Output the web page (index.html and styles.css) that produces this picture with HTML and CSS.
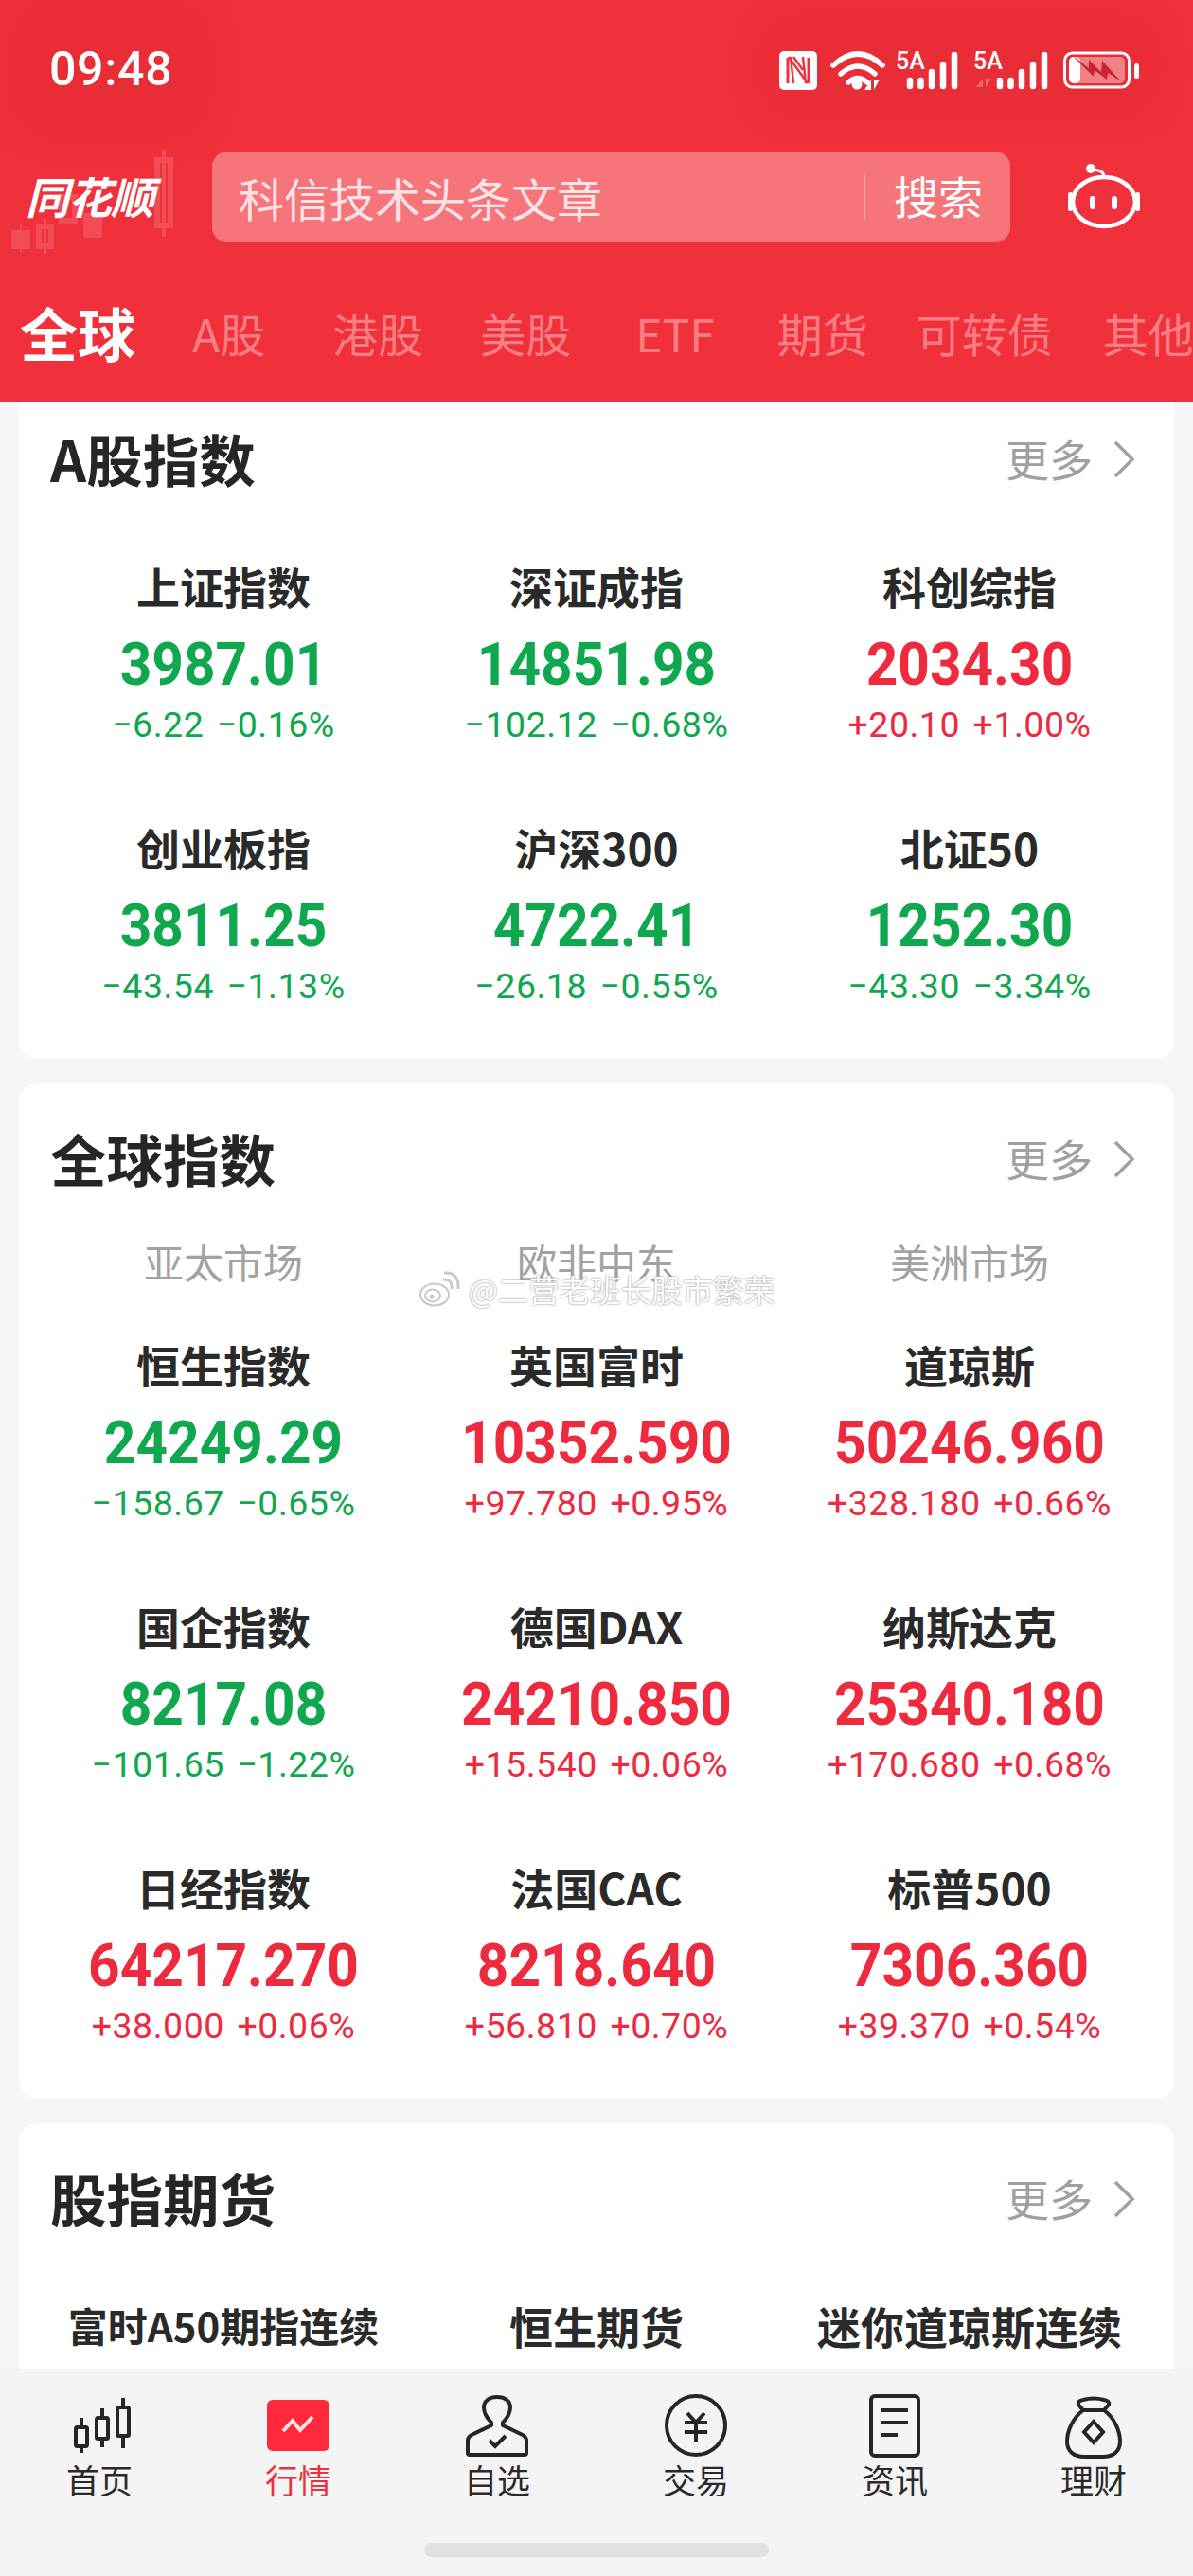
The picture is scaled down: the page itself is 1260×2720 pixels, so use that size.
FILE: index.html
```html
<!DOCTYPE html>
<html lang="zh-CN">
<head>
<meta charset="utf-8">
<title>行情</title>
<link rel="stylesheet" href="styles.css">
</head>
<body>
<div class="phone">
  <header class="header">
    <div class="status">
      <span class="time">09:48</span>
      <div class="status-icons">
        <svg class="si" width="380" height="60" viewBox="823 40 380 60">
          <rect x="823" y="54" width="40" height="41" rx="5" fill="#fff"/>
          <path d="M832 61V88M854 61V88" stroke="#f0303a" stroke-width="3" fill="none"/>
          <path d="M833 60L853 88M838 60L848 74M838 88L835 60M848 60L851 88" stroke="#f0303a" stroke-width="2.4" fill="none"/>
          <path d="M880 69Q906 45 932 69M888 78Q906 62 924 78M896 87Q906 78 916 87" stroke="#fff" stroke-width="5.5" stroke-linecap="round" fill="none"/>
          <circle cx="905" cy="89" r="5.5" fill="#fff"/>
          <path d="M918 95V84L911 95ZM921 84V95L927 84Z" fill="#fff" transform="translate(2 0)"/>
          <text class="s5a" x="946" y="73">5A</text>
          <path d="M961 85V91M972.500 85V91M984 76V91M996 68V91M1008 58V91" stroke="#fff" stroke-width="6.500" stroke-linecap="round" fill="none"/>
          <text class="s5a" x="1028" y="73">5A</text>
          <path d="M1038 83V92L1031 92ZM1041 83V92L1047 83Z" fill="#fff" opacity=".28"/>
          <path d="M1056 85V91M1067.500 85V91M1079 76V91M1091 68V91M1103 58V91" stroke="#fff" stroke-width="6.500" stroke-linecap="round" fill="none"/>
          <rect x="1124.500" y="56" width="68" height="36" rx="8" fill="none" stroke="#fff" stroke-width="3"/>
          <rect x="1129" y="60" width="59" height="28" rx="5" fill="#fff" opacity=".4"/>
          <rect x="1129" y="60" width="12" height="28" rx="5" fill="#fff"/>
          <path d="M1132 58L1150 72L1150 63L1163 76L1164 64L1184 86L1170 77L1169 84L1156 74L1155 81Z" fill="#c9252f"/>
          <rect x="1198" y="67" width="5" height="16" rx="2.500" fill="#fff"/>
        </svg>
      </div>
    </div>
    <div class="search-row">
      <svg class="candles" width="190" height="110" viewBox="0 0 190 110">
        <g fill="#fff" opacity=".14">
          <rect x="12" y="85" width="20" height="20"/><rect x="21" y="79" width="2" height="30"/>
          <path fill-rule="evenodd" d="M38 78H57V105H38ZM44 84V99H51V84Z"/><rect x="46" y="73" width="3" height="38"/>
          <path fill-rule="evenodd" d="M62 47H82V78H62ZM68 53V72H76V53Z"/>
          <rect x="88" y="67" width="20" height="26"/>
          <path fill-rule="evenodd" d="M163 8H183V83H163ZM169 14V77H177V14Z"/><rect x="171" y="0" width="4" height="92"/>
        </g>
      </svg>
      <span class="logo">同花顺</span>
      <div class="search">
        <span class="search-text">科信技术头条文章</span>
        <span class="search-btn">搜索</span>
      </div>
      <svg class="robot" width="80" height="70" viewBox="0 0 80 70">
        <ellipse cx="40" cy="40" rx="33" ry="26" fill="none" stroke="#fff" stroke-width="4.500"/>
        <path d="M40 14C40 8 35 7 29 6" stroke="#fff" stroke-width="3" fill="none"/>
        <circle cx="26" cy="5" r="5" fill="#fff"/>
        <rect x="2" y="30" width="5" height="20" rx="2.500" fill="#fff"/>
        <rect x="73" y="30" width="5" height="20" rx="2.500" fill="#fff"/>
        <rect x="25" y="34" width="6" height="14" rx="3" fill="#fff"/>
        <rect x="48" y="34" width="6" height="14" rx="3" fill="#fff"/>
      </svg>
    </div>
    <nav class="tabs">
      <span class="tab tab-on">全球</span>
      <span class="tab">A股</span>
      <span class="tab">港股</span>
      <span class="tab">美股</span>
      <span class="tab">ETF</span>
      <span class="tab">期货</span>
      <span class="tab">可转债</span>
      <span class="tab">其他</span>
    </nav>
  </header>

  <main class="content">
    <section class="card card-first">
      <div class="card-head"><h2 class="card-title">A股指数</h2><span class="more">更多<svg class="chev" width="24" height="40" viewBox="0 0 24 40"><path d="M3 2L21 20L3 38" fill="none" stroke="#a0a0a0" stroke-width="3.500"/></svg></span></div>
      <div class="grid grid-a">
        <div class="item"><div class="name">上证指数</div><div class="val down">3987.01</div><div class="chg down">−6.22&nbsp;&nbsp;−0.16%</div></div>
        <div class="item"><div class="name">深证成指</div><div class="val down">14851.98</div><div class="chg down">−102.12&nbsp;&nbsp;−0.68%</div></div>
        <div class="item"><div class="name">科创综指</div><div class="val up">2034.30</div><div class="chg up">+20.10&nbsp;&nbsp;+1.00%</div></div>
        <div class="item"><div class="name">创业板指</div><div class="val down">3811.25</div><div class="chg down">−43.54&nbsp;&nbsp;−1.13%</div></div>
        <div class="item"><div class="name">沪深300</div><div class="val down">4722.41</div><div class="chg down">−26.18&nbsp;&nbsp;−0.55%</div></div>
        <div class="item"><div class="name">北证50</div><div class="val down">1252.30</div><div class="chg down">−43.30&nbsp;&nbsp;−3.34%</div></div>
      </div>
    </section>

    <section class="card">
      <div class="card-head"><h2 class="card-title">全球指数</h2><span class="more">更多<svg class="chev" width="24" height="40" viewBox="0 0 24 40"><path d="M3 2L21 20L3 38" fill="none" stroke="#a0a0a0" stroke-width="3.500"/></svg></span></div>
      <div class="regions"><span>亚太市场</span><span>欧非中东</span><span>美洲市场</span></div>
      <div class="grid">
        <div class="item"><div class="name">恒生指数</div><div class="val down">24249.29</div><div class="chg down">−158.67&nbsp;&nbsp;−0.65%</div></div>
        <div class="item"><div class="name">英国富时</div><div class="val up">10352.590</div><div class="chg up">+97.780&nbsp;&nbsp;+0.95%</div></div>
        <div class="item"><div class="name">道琼斯</div><div class="val up">50246.960</div><div class="chg up">+328.180&nbsp;&nbsp;+0.66%</div></div>
        <div class="item"><div class="name">国企指数</div><div class="val down">8217.08</div><div class="chg down">−101.65&nbsp;&nbsp;−1.22%</div></div>
        <div class="item"><div class="name">德国DAX</div><div class="val up">24210.850</div><div class="chg up">+15.540&nbsp;&nbsp;+0.06%</div></div>
        <div class="item"><div class="name">纳斯达克</div><div class="val up">25340.180</div><div class="chg up">+170.680&nbsp;&nbsp;+0.68%</div></div>
        <div class="item"><div class="name">日经指数</div><div class="val up">64217.270</div><div class="chg up">+38.000&nbsp;&nbsp;+0.06%</div></div>
        <div class="item"><div class="name">法国CAC</div><div class="val up">8218.640</div><div class="chg up">+56.810&nbsp;&nbsp;+0.70%</div></div>
        <div class="item"><div class="name">标普500</div><div class="val up">7306.360</div><div class="chg up">+39.370&nbsp;&nbsp;+0.54%</div></div>
      </div>
      <div class="watermark">
        <svg width="44" height="38" viewBox="0 0 44 38">
          <ellipse cx="17" cy="25" rx="15" ry="11.500" fill="#fff" stroke="#c8c8c8" stroke-width="2"/>
          <ellipse cx="15" cy="26" rx="8" ry="6.500" fill="none" stroke="#c8c8c8" stroke-width="2"/>
          <circle cx="14" cy="27" r="2.500" fill="#c8c8c8"/>
          <path d="M26 9Q36 8 35 19M27 2Q43 1 42 19" fill="none" stroke="#c8c8c8" stroke-width="3"/>
        </svg>
        <span>@二营老班长股市繁荣</span>
      </div>
    </section>

    <section class="card">
      <div class="card-head"><h2 class="card-title">股指期货</h2><span class="more">更多<svg class="chev" width="24" height="40" viewBox="0 0 24 40"><path d="M3 2L21 20L3 38" fill="none" stroke="#a0a0a0" stroke-width="3.500"/></svg></span></div>
      <div class="grid grid-a">
        <div class="item"><div class="name name-sm">富时A50期指连续</div></div>
        <div class="item"><div class="name">恒生期货</div></div>
        <div class="item"><div class="name">迷你道琼斯连续</div></div>
      </div>
    </section>
  </main>

  <footer class="tabbar">
    <div class="bar-row">
      <div class="bar-item">
        <svg class="bar-icon" viewBox="0 0 80 70" width="80" height="70"><g fill="none" stroke="#262626" stroke-width="4"><rect x="15" y="35" width="12" height="20" rx="1.500"/><path d="M21 25V35M21 55V62"/><rect x="37" y="25" width="12" height="22" rx="1.500"/><path d="M43 15V25M43 47V56"/><rect x="59" y="14" width="12" height="30" rx="1.500"/><path d="M65 4V14M65 44V57"/></g></svg>
        <span class="bar-label">首页</span>
      </div>
      <div class="bar-item bar-on">
        <svg class="bar-icon" viewBox="0 0 80 70" width="80" height="70"><rect x="7" y="6" width="66" height="54" rx="6" fill="#fe2a3c"/><path d="M24 39L34 28L42 38L55 24" fill="none" stroke="#fde4e6" stroke-width="4"/></svg>
        <span class="bar-label">行情</span>
      </div>
      <div class="bar-item">
        <svg class="bar-icon" viewBox="0 0 80 70" width="80" height="70"><path d="M34 30C29 25 26 20 26 14C26 7 32 3 40 3C48 3 54 7 54 14C54 20 51 25 46 30V33L67 43Q71 45 71 49V62Q71 64 69 64H11Q9 64 9 62V49Q9 45 13 43L34 33Z" fill="none" stroke="#262626" stroke-width="4" stroke-linejoin="round"/><path d="M32 49L38 55L49 44" fill="none" stroke="#262626" stroke-width="4"/></svg>
        <span class="bar-label">自选</span>
      </div>
      <div class="bar-item">
        <svg class="bar-icon" viewBox="0 0 80 70" width="80" height="70"><circle cx="40" cy="33" r="31" fill="none" stroke="#262626" stroke-width="4"/><path d="M31 20L40 30L49 20M28 30H52M28 40H52M40 30V50" fill="none" stroke="#262626" stroke-width="4"/></svg>
        <span class="bar-label">交易</span>
      </div>
      <div class="bar-item">
        <svg class="bar-icon" viewBox="0 0 80 70" width="80" height="70"><rect x="15" y="2" width="50" height="63" rx="4" fill="none" stroke="#262626" stroke-width="4"/><path d="M25 17H54M25 30H54M25 43H43" fill="none" stroke="#262626" stroke-width="4"/></svg>
        <span class="bar-label">资讯</span>
      </div>
      <div class="bar-item">
        <svg class="bar-icon" viewBox="0 0 80 70" width="80" height="70"><path d="M29 17C18 25 12 39 12 50C12 61 20 66 30 66H50C60 66 68 61 68 50C68 39 62 25 51 17Z" fill="none" stroke="#262626" stroke-width="4" stroke-linejoin="round"/><path d="M29 17L24 11Q23 7 29 6Q40 3 51 6Q57 7 56 11L51 17" fill="none" stroke="#262626" stroke-width="4"/><path d="M40 29L50 40L40 51L30 40Z" fill="none" stroke="#262626" stroke-width="4"/></svg>
        <span class="bar-label">理财</span>
      </div>
    </div>
    <div class="home-bar"></div>
  </footer>
</div>
</body>
</html>
```
FILE: styles.css
```css
* { box-sizing: border-box; margin: 0; padding: 0; }
html, body { width: 1260px; height: 2720px; overflow: hidden; }
body { font-family: "Noto Sans CJK SC", "Noto Sans", sans-serif; background: #f6f6f6; }
.phone { width: 1260px; height: 2720px; display: flex; flex-direction: column; overflow: hidden; }

.header { height: 424px; flex: none; background: #f0303a; color: #fff; display: flex; flex-direction: column; }
.status { height: 160px; padding: 40px 0 0 52px; display: flex; justify-content: space-between; align-items: flex-start; }
.time { font-family: Roboto, sans-serif; font-weight: 500; font-size: 50px; line-height: 66px; height: 66px; letter-spacing: .7px; box-shadow: 0 0 50px 26px rgba(190, 30, 40, .16); background: rgba(190, 30, 40, .16); }
.status-icons { margin-right: 57px; box-shadow: 0 0 50px 10px rgba(190, 30, 40, .16); background: rgba(190, 30, 40, .16); height: 60px; }
.si { display: block; }
.s5a { font-family: Roboto, sans-serif; font-size: 25px; font-weight: 500; fill: #fff; }

.search-row { position: relative; height: 96px; display: flex; align-items: center; flex: none; }
.candles { position: absolute; left: 0; top: -2px; }
.logo { position: relative; width: 224px; padding-left: 27px; margin-top: -5px; font-size: 46px; line-height: 60px; font-weight: 700; font-style: italic; letter-spacing: -1px; flex: none; }
.search { width: 843px; height: 96px; background: #f6757b; border-radius: 16px; display: flex; align-items: center; justify-content: space-between; padding-left: 28px; flex: none; }
.search-text { font-size: 48px; line-height: 60px; color: #fde3e4; }
.search-btn { font-size: 47px; line-height: 44px; height: 48px; width: 155px; padding-left: 30px; border-left: 2px solid #f9a5a8; color: #fff; }
.robot { margin-left: 59px; flex: none; }

.tabs { display: flex; align-items: center; margin-top: 55px; height: 80px; padding-left: 21px; gap: 58px; white-space: nowrap; }
.tab { font-size: 48px; line-height: 80px; color: #fb7d84; flex: none; }
.tab-on { font-size: 61px; font-weight: 700; color: #fff; }
.tab:nth-child(2) { margin-left: 2px; }
.tab:nth-child(3) { margin-left: 13px; }
.tab:nth-child(4) { margin-left: 2px; }
.tab:nth-child(5) { margin-left: 10px; }
.tab:nth-child(6) { margin-left: 8px; }
.tab:nth-child(7) { margin-left: -7px; }
.tab:nth-child(8) { margin-left: -5px; }

.content { flex: 1; min-height: 0; overflow: hidden; padding: 0 20px; display: flex; flex-direction: column; gap: 26px; }
.card { position: relative; flex: none; width: 1220px; background: #fff; border-radius: 18px; padding: 38px 0 62px; }
.card-first { margin-top: -19px; }
.card-head { display: flex; justify-content: space-between; align-items: center; height: 80px; padding: 0 41px 0 33px; }
.card-title { font-size: 59.500px; line-height: 80px; font-weight: 700; color: #262626; }
.more { display: flex; align-items: center; gap: 21px; font-size: 46px; color: #a0a0a0; }
.chev { display: block; margin-top: 3px; }

.regions { display: grid; grid-template-columns: repeat(3, 394px); padding: 0 19px; margin-top: 40px; margin-bottom: 50px; text-align: center; font-size: 42px; line-height: 60px; color: #a2a2a2; }
.grid { display: grid; grid-template-columns: repeat(3, 394px); row-gap: 86px; padding: 0 19px; text-align: center; }
.grid-a { margin-top: 67px; }
.item { height: 190px; margin-top: -2px; margin-bottom: 2px; }
.name { font-size: 46px; line-height: 60px; height: 60px; font-weight: 700; color: #2a2a2a; white-space: nowrap; }
.name-sm { font-size: 42px; }
.val { font-family: Roboto, sans-serif; font-size: 63px; line-height: 100px; height: 100px; margin-top: 4px; margin-bottom: -4px; font-weight: 700; transform: scaleX(.93); white-space: nowrap; }
.chg { font-family: Roboto, sans-serif; font-size: 37.500px; letter-spacing: .5px; word-spacing: -3px; line-height: 30px; height: 30px; margin-top: 2px; white-space: nowrap; }
.up { color: #ee2a3e; }
.down { color: #10a84e; }

.watermark { position: absolute; left: 422px; top: 198px; display: flex; align-items: center; gap: 9px; font-size: 32.500px; line-height: 38px; color: #fff; text-shadow: 0 0 2px #9a9a9a, 0 0 2px #b5b5b5; white-space: nowrap; }

.tabbar { height: 219px; flex: none; background: #f4f4f4; padding-top: 27px; display: flex; flex-direction: column; align-items: center; }
.bar-row { width: 1260px; display: grid; grid-template-columns: repeat(6, 210px); }
.bar-item { display: flex; flex-direction: column; align-items: center; }
.bar-icon { display: block; }
.bar-label { font-size: 35px; line-height: 40px; margin-bottom: 4px; color: #2a2a2a; }
.bar-on .bar-label { color: #ec3040; }
.home-bar { width: 364px; height: 15px; border-radius: 8px; background: #e1e1e1; margin-top: 43px; }
```
